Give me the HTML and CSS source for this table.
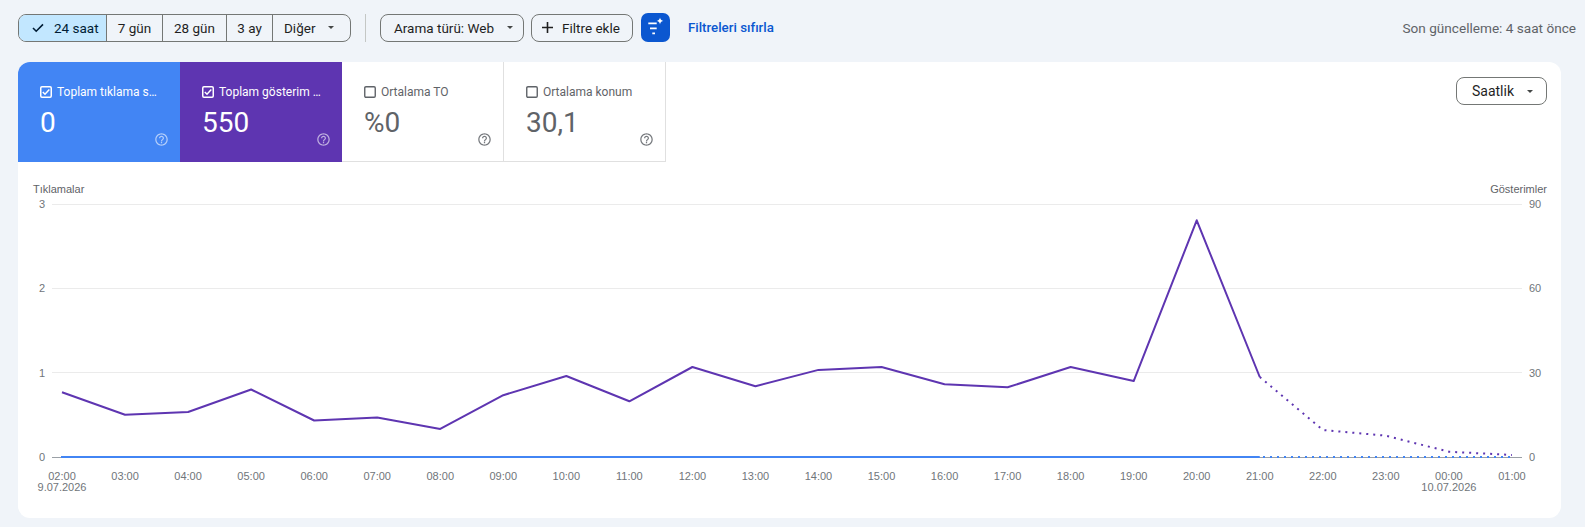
FILE: index.html
```html
<!DOCTYPE html>
<html lang="tr">
<head>
<meta charset="utf-8">
<title>Performans</title>
<link rel="stylesheet" href="styles.css">
</head>
<body>
<div class="topbar">
  <div class="seg">
    <div class="seg-item sel w1">
      <svg class="chk" width="12" height="10" viewBox="0 0 12 10"><polyline points="1,5 4.2,8.2 11,1.4" fill="none" stroke="#001d35" stroke-width="1.6"/></svg>
      <span>24 saat</span>
    </div>
    <div class="seg-item w2">7 gün</div>
    <div class="seg-item w3">28 gün</div>
    <div class="seg-item w4">3 ay</div>
    <div class="seg-item w5"><span>Diğer</span><span class="caret"></span></div>
  </div>
  <div class="vsep"></div>
  <div class="chip chip-type"><span>Arama türü: Web</span><span class="caret"></span></div>
  <div class="chip chip-add">
    <svg width="11" height="11" viewBox="0 0 11 11"><path d="M5.5 0v11M0 5.5h11" stroke="#1f1f1f" stroke-width="1.6"/></svg>
    <span>Filtre ekle</span>
  </div>
  <div class="filter-btn">
    <svg width="29" height="29" viewBox="0 0 29 29">
      <path d="M7.3 10.3h8.4M9 15.3h6.7M11.3 20.3h2.7" stroke="#fff" stroke-width="1.7" fill="none"/>
      <path d="M19 4.6 Q19.4 7.6 22.4 8 Q19.4 8.4 19 11.4 Q18.6 8.4 15.6 8 Q18.6 7.6 19 4.6Z" fill="#fff"/>
    </svg>
  </div>
  <a class="reset">Filtreleri sıfırla</a>
  <div class="updated">Son güncelleme: 4 saat önce</div>
</div>

<div class="card">
  <div class="card-head">
    <div class="tiles">
      <div class="tile tile-blue">
        <div class="tile-label">
          <svg class="cb" width="12" height="12" viewBox="0 0 12 12"><rect x="0.75" y="0.75" width="10.5" height="10.5" rx="1.2" fill="none" stroke="#fff" stroke-width="1.5"/><polyline points="2.8,6 5,8.2 9.3,3.6" fill="none" stroke="#fff" stroke-width="1.5"/></svg>
          <span class="lbl" title="Toplam tıklama sayısı">Toplam tıklama s…</span>
        </div>
        <div class="tile-body">
          <span class="val">0</span>
          <svg class="help" width="15" height="15" viewBox="0 0 24 24"><path fill="currentColor" d="M11 18h2v-2h-2v2zm1-16C6.48 2 2 6.48 2 12s4.48 10 10 10 10-4.48 10-10S17.52 2 12 2zm0 18c-4.41 0-8-3.59-8-8s3.59-8 8-8 8 3.59 8 8-3.59 8-8 8zm0-14c-2.21 0-4 1.79-4 4h2c0-1.1.9-2 2-2s2 .9 2 2c0 2-3 1.75-3 5h2c0-2.25 3-2.5 3-5 0-2.21-1.79-4-4-4z"/></svg>
        </div>
      </div>
      <div class="tile tile-purple">
        <div class="tile-label">
          <svg class="cb" width="12" height="12" viewBox="0 0 12 12"><rect x="0.75" y="0.75" width="10.5" height="10.5" rx="1.2" fill="none" stroke="#fff" stroke-width="1.5"/><polyline points="2.8,6 5,8.2 9.3,3.6" fill="none" stroke="#fff" stroke-width="1.5"/></svg>
          <span class="lbl" title="Toplam gösterim sayısı">Toplam gösterim …</span>
        </div>
        <div class="tile-body">
          <span class="val">550</span>
          <svg class="help" width="15" height="15" viewBox="0 0 24 24"><path fill="currentColor" d="M11 18h2v-2h-2v2zm1-16C6.48 2 2 6.48 2 12s4.48 10 10 10 10-4.48 10-10S17.52 2 12 2zm0 18c-4.41 0-8-3.59-8-8s3.59-8 8-8 8 3.59 8 8-3.59 8-8 8zm0-14c-2.21 0-4 1.79-4 4h2c0-1.1.9-2 2-2s2 .9 2 2c0 2-3 1.75-3 5h2c0-2.25 3-2.5 3-5 0-2.21-1.79-4-4-4z"/></svg>
        </div>
      </div>
      <div class="tile tile-white">
        <div class="tile-label">
          <svg class="cb" width="12" height="12" viewBox="0 0 12 12"><rect x="0.75" y="0.75" width="10.5" height="10.5" rx="1.2" fill="none" stroke="#5f6368" stroke-width="1.4"/></svg>
          <span class="lbl">Ortalama TO</span>
        </div>
        <div class="tile-body">
          <span class="val">%0</span>
          <svg class="help" width="15" height="15" viewBox="0 0 24 24"><path fill="currentColor" d="M11 18h2v-2h-2v2zm1-16C6.48 2 2 6.48 2 12s4.48 10 10 10 10-4.48 10-10S17.52 2 12 2zm0 18c-4.41 0-8-3.59-8-8s3.59-8 8-8 8 3.59 8 8-3.59 8-8 8zm0-14c-2.21 0-4 1.79-4 4h2c0-1.1.9-2 2-2s2 .9 2 2c0 2-3 1.75-3 5h2c0-2.25 3-2.5 3-5 0-2.21-1.79-4-4-4z"/></svg>
        </div>
      </div>
      <div class="tile tile-white">
        <div class="tile-label">
          <svg class="cb" width="12" height="12" viewBox="0 0 12 12"><rect x="0.75" y="0.75" width="10.5" height="10.5" rx="1.2" fill="none" stroke="#5f6368" stroke-width="1.4"/></svg>
          <span class="lbl">Ortalama konum</span>
        </div>
        <div class="tile-body">
          <span class="val">30,1</span>
          <svg class="help" width="15" height="15" viewBox="0 0 24 24"><path fill="currentColor" d="M11 18h2v-2h-2v2zm1-16C6.48 2 2 6.48 2 12s4.48 10 10 10 10-4.48 10-10S17.52 2 12 2zm0 18c-4.41 0-8-3.59-8-8s3.59-8 8-8 8 3.59 8 8-3.59 8-8 8zm0-14c-2.21 0-4 1.79-4 4h2c0-1.1.9-2 2-2s2 .9 2 2c0 2-3 1.75-3 5h2c0-2.25 3-2.5 3-5 0-2.21-1.79-4-4-4z"/></svg>
        </div>
      </div>
    </div>
    <div class="chip chip-period"><span>Saatlik</span><span class="caret big"></span></div>
  </div>

  <svg class="chart" width="1543" height="328" viewBox="0 0 1543 328">
    <g class="axis-title">
      <text x="15" y="21">Tıklamalar</text>
      <text x="1529" y="21" text-anchor="end">Gösterimler</text>
    </g>
    <g stroke="#ebebeb" stroke-width="1">
      <line x1="34" y1="32.5" x2="1504" y2="32.5"/>
      <line x1="34" y1="116.5" x2="1504" y2="116.5"/>
      <line x1="34" y1="200.5" x2="1504" y2="200.5"/>
    </g>
    <line x1="34" y1="285.5" x2="1504" y2="285.5" stroke="#9aa0a6" stroke-width="1"/>
    <g class="axis" text-anchor="end">
      <text x="27" y="36">3</text>
      <text x="27" y="120">2</text>
      <text x="27" y="204.5">1</text>
      <text x="27" y="289">0</text>
    </g>
    <g class="axis">
      <text x="1511" y="36">90</text>
      <text x="1511" y="120">60</text>
      <text x="1511" y="204.5">30</text>
      <text x="1511" y="289">0</text>
    </g>
    <line x1="43" y1="285" x2="1241.76" y2="285" stroke="#4285f4" stroke-width="2"/>
    <line x1="1245" y1="285" x2="1496" y2="285" stroke="#4285f4" stroke-width="2" stroke-dasharray="2 5"/>
    <path d="M44,220.3 L107.04,242.8 L170.08,240 L233.12,217.5 L296.16,248.5 L359.2,245.6 L422.24,256.9 L485.28,223.2 L548.32,204 L611.36,229.3 L674.4,195 L737.44,214.2 L800.48,197.9 L863.52,195 L926.56,212.2 L989.6,215.3 L1052.64,195 L1115.68,209.1 L1178.72,48.3 L1241.76,205" fill="none" stroke="#5e35b1" stroke-width="2" stroke-linejoin="round"/>
    <path d="M1241.76,205 L1304.8,258 L1367.84,263.7 L1430.88,279.7 L1493.92,283" fill="none" stroke="#5e35b1" stroke-width="2" stroke-dasharray="2 5"/>
    <g class="axis" text-anchor="middle">
      <text x="44" y="308">02:00</text>
      <text x="44" y="319">9.07.2026</text>
      <text x="107.04" y="308">03:00</text>
      <text x="170.08" y="308">04:00</text>
      <text x="233.12" y="308">05:00</text>
      <text x="296.16" y="308">06:00</text>
      <text x="359.2" y="308">07:00</text>
      <text x="422.24" y="308">08:00</text>
      <text x="485.28" y="308">09:00</text>
      <text x="548.32" y="308">10:00</text>
      <text x="611.36" y="308">11:00</text>
      <text x="674.4" y="308">12:00</text>
      <text x="737.44" y="308">13:00</text>
      <text x="800.48" y="308">14:00</text>
      <text x="863.52" y="308">15:00</text>
      <text x="926.56" y="308">16:00</text>
      <text x="989.6" y="308">17:00</text>
      <text x="1052.64" y="308">18:00</text>
      <text x="1115.68" y="308">19:00</text>
      <text x="1178.72" y="308">20:00</text>
      <text x="1241.76" y="308">21:00</text>
      <text x="1304.8" y="308">22:00</text>
      <text x="1367.84" y="308">23:00</text>
      <text x="1430.88" y="308">00:00</text>
      <text x="1430.88" y="319">10.07.2026</text>
      <text x="1493.92" y="308">01:00</text>
    </g>
  </svg>
</div>
</body>
</html>
```
FILE: styles.css
```css
* { box-sizing: border-box; }
html, body { background: #f0f4f9; }
body {
  margin: 0;
  padding: 13px 24px 0 18px;
  font-family: Roboto, "Noto Sans", sans-serif;
  height: 527px;
  overflow: hidden;
}
.topbar {
  display: flex;
  align-items: center;
  height: 29px;
  margin-right: -15px;
}
.seg {
  display: flex;
  height: 28px;
  border: 1px solid #747775;
  border-radius: 8px;
  overflow: hidden;
  font-size: 13.5px;
  color: #1f1f1f;
}
.seg-item {
  display: flex;
  align-items: center;
  justify-content: center;
  border-left: 1px solid #747775;
}
.seg-item.sel {
  border-left: none;
  background: #c2e7ff;
  color: #001d35;
  justify-content: flex-start;
  padding-left: 13px;
  gap: 10px;
}
.w1 { width: 87px; }
.w2 { width: 56px; }
.w3 { width: 64px; }
.w4 { width: 46px; }
.w5 { width: 78px; justify-content: flex-start; padding-left: 11px; gap: 13px; }
.caret {
  width: 0;
  height: 0;
  border-left: 3px solid transparent;
  border-right: 3px solid transparent;
  border-top: 3px solid #444746;
}
.caret.big {
  border-left-width: 3.5px;
  border-right-width: 3.5px;
  border-top-width: 3.5px;
}
.vsep {
  width: 1px;
  height: 28px;
  background: #c4c7c5;
  margin: 0 14px 0 14px;
}
.chip {
  display: flex;
  align-items: center;
  height: 28px;
  border: 1px solid #747775;
  border-radius: 8px;
  font-size: 13.5px;
  color: #1f1f1f;
}
.chip-type { width: 144px; padding-left: 13px; gap: 13px; }
.chip-add { width: 102px; margin-left: 7px; padding-left: 10px; gap: 9px; }
.filter-btn {
  width: 29px;
  height: 29px;
  margin-left: 8px;
  border-radius: 7px;
  background: #0b57d0;
  display: flex;
}
.reset {
  margin-left: 18px;
  font-size: 13.3px;
  font-weight: 500;
  color: #0b57d0;
}
.updated {
  margin-left: auto;
  font-size: 13.6px;
  color: #5f6368;
}
.card {
  margin-top: 20px;
  height: 456px;
  background: #fff;
  border-radius: 12px;
  overflow: hidden;
}
.card-head {
  display: flex;
  align-items: flex-start;
  height: 100px;
}
.tiles { display: flex; }
.tile {
  width: 162px;
  height: 100px;
  padding: 24px 11px 0 22px;
  display: flex;
  flex-direction: column;
}
.tile-blue { background: #4285f4; color: #fff; }
.tile-purple { background: #5e35b1; color: #fff; }
.tile-white {
  color: #5f6368;
  border-right: 1px solid #e0e0e0;
  border-bottom: 1px solid #e0e0e0;
}
.tile-label {
  display: flex;
  align-items: center;
  gap: 5px;
  height: 12px;
  font-size: 12px;
}
.cb { flex: none; }
.lbl {
  white-space: nowrap;
  line-height: 16px;
}
.tile-body {
  display: flex;
  justify-content: space-between;
  align-items: flex-start;
  margin-top: 9px;
}
.val {
  font-size: 28px;
  line-height: 32px;
}
.help {
  margin-top: 25px;
  opacity: 0.6;
}
.tile-white .help { opacity: 0.85; }
.chip-period {
  margin: 15px 14px 0 auto;
  width: 91px;
  padding-left: 15px;
  gap: 13px;
  font-size: 14px;
}
.chart {
  display: block;
  margin-top: 10px;
}
.chart text {
  font-family: "Liberation Sans", Arial, sans-serif;
  font-size: 11px;
  fill: #70757a;
}
.chart .axis-title text { fill: #5f6368; }
```
